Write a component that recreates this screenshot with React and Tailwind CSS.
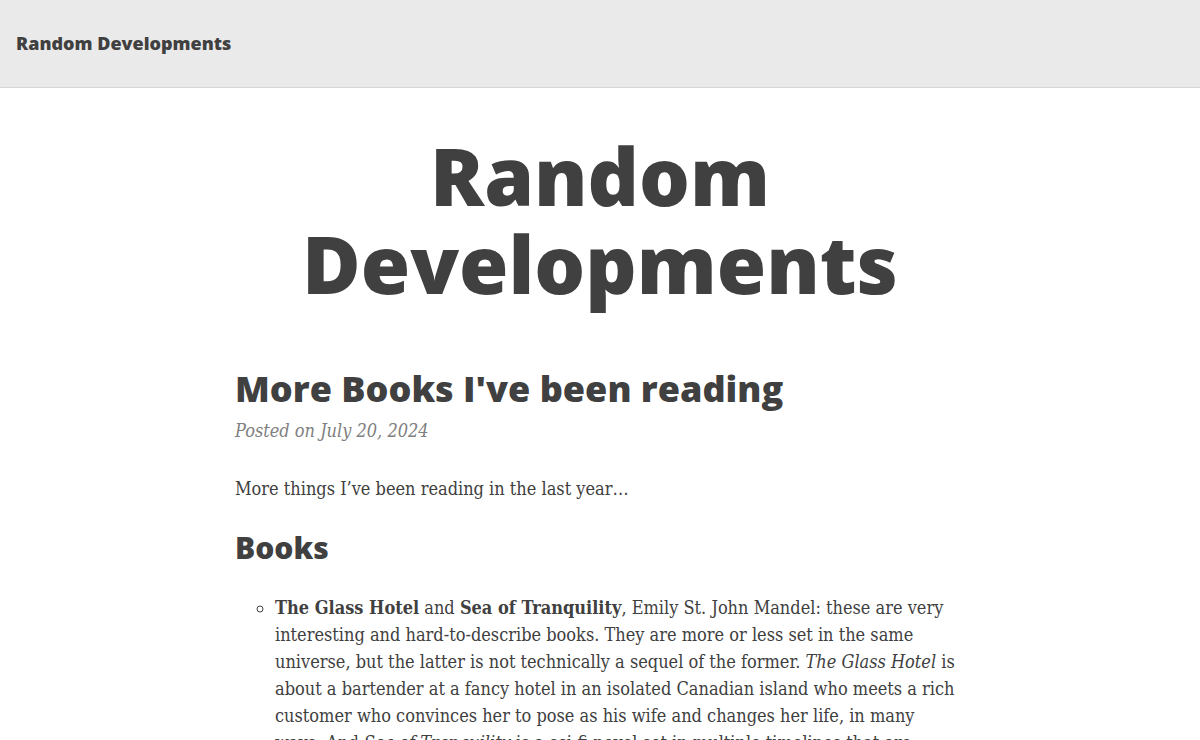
export default function App() {
  const sans = "font-['Open_Sans',sans-serif]"
  const serif = "font-['DejaVu_Serif_Condensed','DejaVu_Serif',serif]"

  return (
    <div className="min-h-screen bg-white text-[#404040]">
      <header className="h-[88px] bg-[#eaeaea] border-b border-[#d6d6d6] flex items-center px-4">
        <a className={`${sans} font-extrabold text-[18px] text-[#404040] pb-[1px]`}>Random Developments</a>
      </header>

      <main className="max-w-[730px] mx-auto">
        <h1 className={`${sans} font-extrabold text-[80px] leading-[88px] text-center mt-[43px]`}>
          Random Developments
        </h1>

        <article className="mt-[60px]">
          <h2 className={`${sans} font-extrabold text-[36px] leading-[44px]`}>More Books I've been reading</h2>
          <p className={`${serif} italic text-[18px] text-[#808080] mt-[6px]`}>Posted on July 20, 2024</p>

          <div className={`${serif} text-[18px] leading-[27px] mt-[31px]`}>
            <p>More things I’ve been reading in the last year…</p>

            <h3 className={`${sans} font-extrabold text-[30px] leading-[36px] mt-[28px]`}>Books</h3>

            <ul className="list-[circle] pl-10 mt-[28px]">
              <li>
                <strong>The Glass Hotel</strong> and <strong>Sea of Tranquility</strong>, Emily St. John Mandel:
                these are very interesting and hard-to-describe books. They are more or less set in the same
                universe, but the latter is not technically a sequel of the former. <em>The Glass Hotel</em> is
                about a bartender at a fancy hotel in an isolated Canadian island who meets a rich customer who
                convinces her to pose as his wife and changes her life, in many ways. And <em>Sea of Tranquility</em> is
                a sci-fi novel set in multiple timelines that are connected by a strange event.
              </li>
            </ul>
          </div>
        </article>
      </main>
    </div>
  )
}
